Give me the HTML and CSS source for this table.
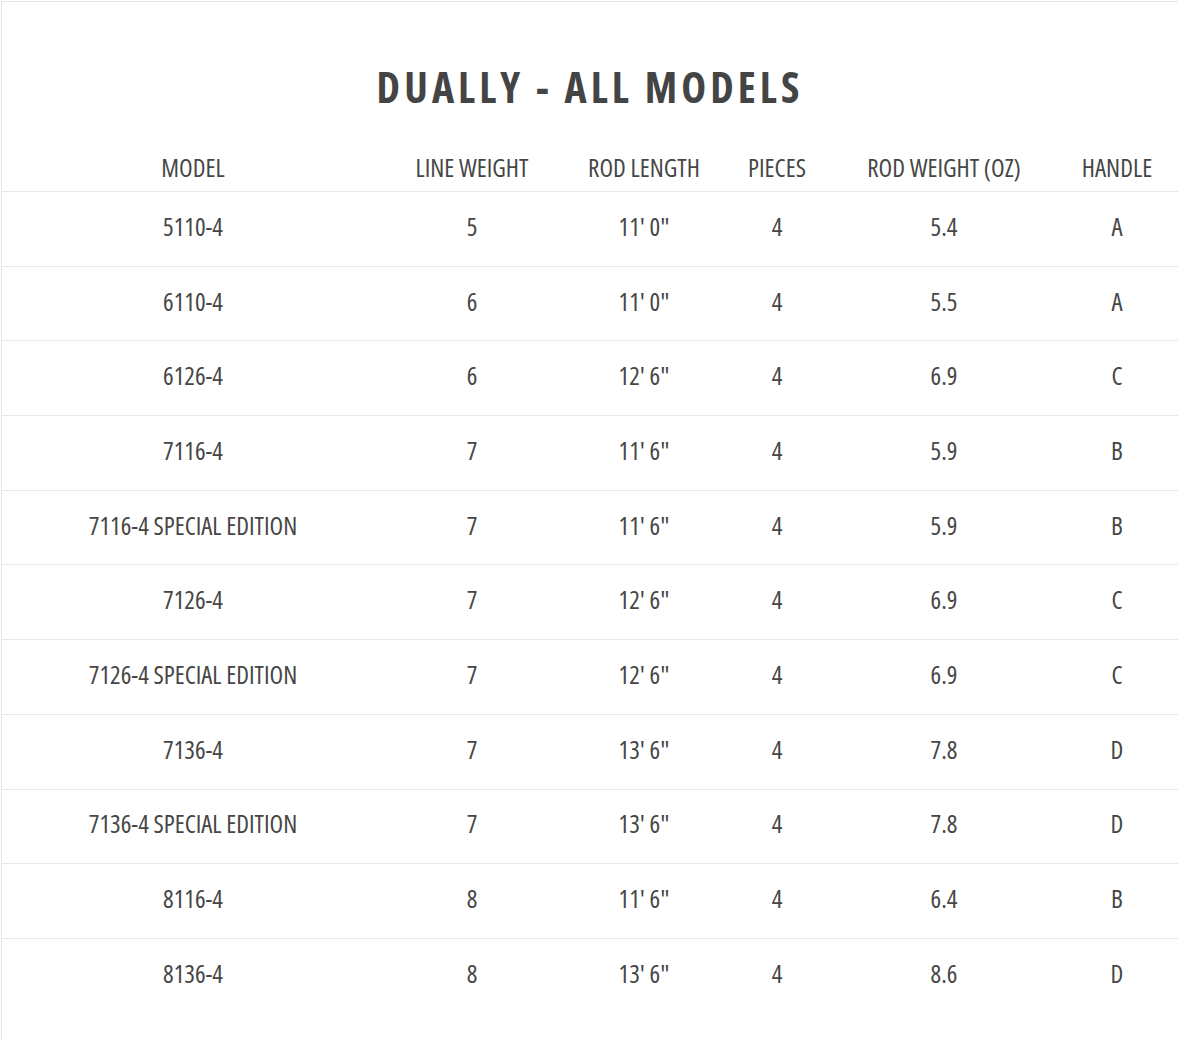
FILE: index.html
```html
<!DOCTYPE html>
<html lang="en">
<head>
<meta charset="utf-8">
<title>Dually - All Models</title>
<link rel="stylesheet" href="styles.css">
</head>
<body>
<section class="panel">
  <h1 class="title">DUALLY - ALL MODELS</h1>
  <div class="spec-table">
    <div class="row head">
      <div class="cell">MODEL</div>
      <div class="cell">LINE WEIGHT</div>
      <div class="cell">ROD LENGTH</div>
      <div class="cell">PIECES</div>
      <div class="cell">ROD WEIGHT (OZ)</div>
      <div class="cell">HANDLE</div>
    </div>
    <div class="row"><div class="cell">5110-4</div><div class="cell">5</div><div class="cell">11' 0"</div><div class="cell">4</div><div class="cell">5.4</div><div class="cell">A</div></div>
    <div class="row"><div class="cell">6110-4</div><div class="cell">6</div><div class="cell">11' 0"</div><div class="cell">4</div><div class="cell">5.5</div><div class="cell">A</div></div>
    <div class="row"><div class="cell">6126-4</div><div class="cell">6</div><div class="cell">12' 6"</div><div class="cell">4</div><div class="cell">6.9</div><div class="cell">C</div></div>
    <div class="row"><div class="cell">7116-4</div><div class="cell">7</div><div class="cell">11' 6"</div><div class="cell">4</div><div class="cell">5.9</div><div class="cell">B</div></div>
    <div class="row"><div class="cell">7116-4 SPECIAL EDITION</div><div class="cell">7</div><div class="cell">11' 6"</div><div class="cell">4</div><div class="cell">5.9</div><div class="cell">B</div></div>
    <div class="row"><div class="cell">7126-4</div><div class="cell">7</div><div class="cell">12' 6"</div><div class="cell">4</div><div class="cell">6.9</div><div class="cell">C</div></div>
    <div class="row"><div class="cell">7126-4 SPECIAL EDITION</div><div class="cell">7</div><div class="cell">12' 6"</div><div class="cell">4</div><div class="cell">6.9</div><div class="cell">C</div></div>
    <div class="row"><div class="cell">7136-4</div><div class="cell">7</div><div class="cell">13' 6"</div><div class="cell">4</div><div class="cell">7.8</div><div class="cell">D</div></div>
    <div class="row"><div class="cell">7136-4 SPECIAL EDITION</div><div class="cell">7</div><div class="cell">13' 6"</div><div class="cell">4</div><div class="cell">7.8</div><div class="cell">D</div></div>
    <div class="row"><div class="cell">8116-4</div><div class="cell">8</div><div class="cell">11' 6"</div><div class="cell">4</div><div class="cell">6.4</div><div class="cell">B</div></div>
    <div class="row last"><div class="cell">8136-4</div><div class="cell">8</div><div class="cell">13' 6"</div><div class="cell">4</div><div class="cell">8.6</div><div class="cell">D</div></div>
  </div>
</section>
</body>
</html>
```
FILE: styles.css
```css
html, body {
  margin: 0;
  padding: 0;
  background: #fff;
  overflow: hidden;
}

body {
  font-family: "Open Sans", "Roboto", sans-serif;
  font-stretch: 75%;
  color: #464646;
}

.panel {
  margin: 1px 0 0 1px;
  border-top: 1px solid #e6e6e6;
  border-left: 1px solid #e6e6e6;
  min-height: 1040px;
  box-sizing: border-box;
}

.title {
  margin: 64px 0 0;
  text-align: center;
  font-size: 42px;
  line-height: 42px;
  font-weight: 700;
  letter-spacing: 4.1px;
  color: #444;
}

.spec-table {
  margin-top: 37px;
}

.row {
  display: grid;
  grid-template-columns: 382px 176px 168px 98px 236px 110px;
  align-items: center;
  height: 73.7px;
  border-bottom: 1px solid #e8e8e8;
  box-sizing: content-box;
}

.row .cell {
  padding-bottom: 6px;
}

.row.head {
  height: 46px;
}

.row.head .cell {
  padding-bottom: 3px;
}

.row.last {
  border-bottom: none;
}

.cell {
  text-align: center;
  font-size: 25px;
  line-height: 30px;
  font-weight: 400;
  letter-spacing: 0;
  white-space: nowrap;
}
```
